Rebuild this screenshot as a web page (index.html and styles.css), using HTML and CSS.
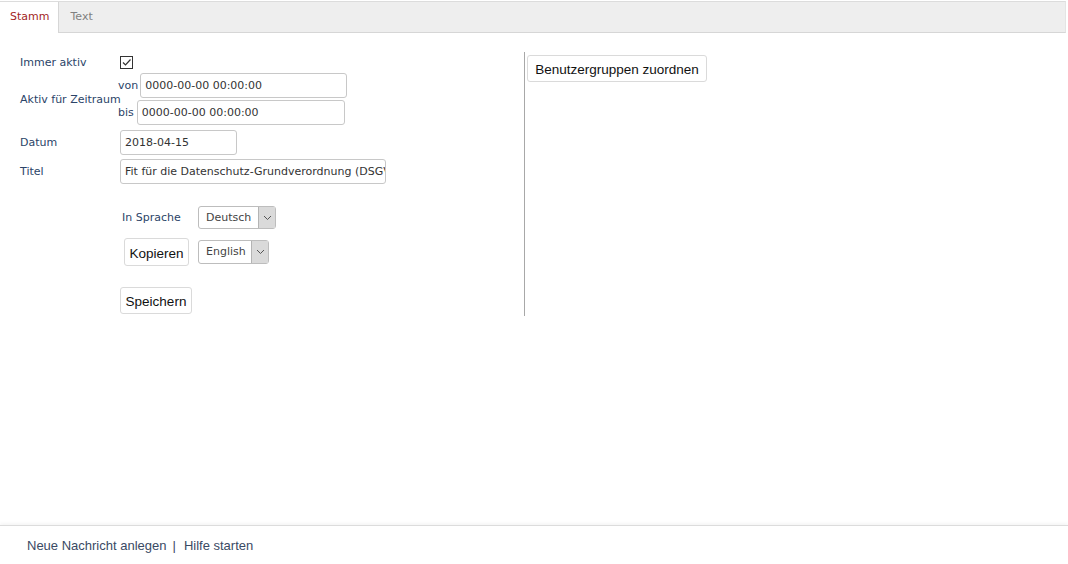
FILE: index.html
```html
<!DOCTYPE html>
<html lang="de">
<head>
<meta charset="utf-8">
<title>Nachricht</title>
<link rel="stylesheet" href="styles.css">
</head>
<body>
<div class="page">
  <div class="tabs">
    <div class="tab active">Stamm</div>
    <div class="tab">Text</div>
  </div>
  <div class="main">
    <div class="left">
      <div class="row row-check">
        <div class="label">Immer aktiv</div>
        <span class="checkbox"><svg width="11" height="11" viewBox="0 0 11 11"><path d="M2 5.5 L4.5 8 L9.5 2.5" fill="none" stroke="#333" stroke-width="1.2"/></svg></span>
      </div>
      <div class="row row-range">
        <div class="label">Aktiv für Zeitraum</div>
        <div class="range">
          <div class="range-line">von<span class="input w-von">0000-00-00 00:00:00</span></div>
          <div class="range-line">bis<span class="input w-bis">0000-00-00 00:00:00</span></div>
        </div>
      </div>
      <div class="row row-datum">
        <div class="label">Datum</div>
        <span class="input w-datum">2018-04-15</span>
      </div>
      <div class="row row-titel">
        <div class="label">Titel</div>
        <span class="input w-titel">Fit für die Datenschutz-Grundverordnung (DSGVO)</span>
      </div>
      <div class="lang">
        <div class="lang-row">
          <span class="lang-label">In Sprache</span>
          <span class="select w-de"><span class="sel-text">Deutsch</span><span class="arrow"><svg width="9" height="6" viewBox="0 0 9 6"><path d="M1 1 L4.5 4.5 L8 1" fill="none" stroke="#555" stroke-width="1"/></svg></span></span>
        </div>
        <div class="lang-row copy-row">
          <button class="btn btn-copy" type="button">Kopieren</button>
          <span class="select w-en"><span class="sel-text">English</span><span class="arrow"><svg width="9" height="6" viewBox="0 0 9 6"><path d="M1 1 L4.5 4.5 L8 1" fill="none" stroke="#555" stroke-width="1"/></svg></span></span>
        </div>
        <button class="btn btn-save" type="button">Speichern</button>
      </div>
    </div>
    <div class="right">
      <button class="btn btn-groups" type="button">Benutzergruppen zuordnen</button>
    </div>
  </div>
  <div class="footer">
    <a class="flink">Neue Nachricht anlegen</a><span class="sep">|</span><a class="flink">Hilfe starten</a>
  </div>
</div>
</body>
</html>
```
FILE: styles.css
```css
html, body {
  margin: 0;
  padding: 0;
  background: #fff;
}
.page {
  height: 100vh;
  display: flex;
  flex-direction: column;
  font-family: "DejaVu Sans", sans-serif;
  font-size: 11px;
  color: #2b4468;
}
.tabs {
  margin-top: 1px;
  margin-right: 2px;
  border-top: 1px solid #dcdcdc;
  border-bottom: 1px solid #d6d6d6;
  border-right: 1px solid #e4e4e4;
  background: #eeeeee;
  height: 30px;
  display: flex;
}
.tab {
  padding: 0 9px 0 11px;
  line-height: 30px;
  color: #808080;
  font-size: 11px;
}
.tab.active {
  background: #fff;
  color: #a32525;
  border-right: 1px solid #d6d6d6;
  height: 31px;
  padding: 0 9px 0 10px;
}
.main {
  flex: 1;
  display: flex;
  align-items: flex-start;
  padding-top: 19px;
}
.left {
  width: 504px;
  padding-left: 20px;
  height: 264px;
  border-right: 1px solid #a8a8a8;
}
.right {
  padding-left: 2px;
  padding-top: 3px;
}
.row {
  display: flex;
  align-items: center;
}
.label {
  width: 100px;
  flex: none;
  white-space: nowrap;
}
.row-check {
  height: 20px;
  align-items: flex-start;
}
.row-check .label {
  line-height: 21px;
}
.checkbox {
  margin-top: 4px;
  width: 11px;
  height: 11px;
  border: 1px solid #333;
  display: flex;
  align-items: center;
  justify-content: center;
  background: #fff;
}
.row-range {
  margin-top: 1px;
}
.row-range .label {
  width: 98px;
  position: relative;
  z-index: 1;
}
.range {
  display: flex;
  flex-direction: column;
  gap: 2px;
}
.range-line {
  display: flex;
  align-items: center;
  white-space: nowrap;
}
.input {
  display: block;
  box-sizing: border-box;
  height: 25px;
  line-height: 23px;
  border: 1px solid #c8c8c8;
  border-radius: 3px;
  padding: 0 4px;
  color: #333;
  background: #fff;
  white-space: nowrap;
  overflow: hidden;
  font-size: 11px;
}
.w-von { width: 207px; margin-left: 2px; }
.w-bis { width: 208px; margin-left: 3px; }
.w-datum { width: 117px; }
.w-titel { width: 266px; }
.row-datum { margin-top: 5px; }
.row-titel { margin-top: 4px; }
.lang {
  margin-top: 22px;
  padding-left: 100px;
}
.lang-row {
  display: flex;
  align-items: center;
}
.lang-label {
  width: 78px;
  padding-left: 2px;
  box-sizing: border-box;
}
.select {
  box-sizing: border-box;
  height: 23px;
  border: 1px solid #bdbdbd;
  border-radius: 3px;
  display: flex;
  align-items: stretch;
  background: #fff;
  color: #444;
}
.sel-text {
  flex: 1;
  padding-left: 7px;
  line-height: 21px;
}
.arrow {
  width: 16px;
  background: #dadada;
  border-left: 1px solid #b4b4b4;
  display: flex;
  align-items: center;
  justify-content: center;
}
.w-de { width: 78px; }
.w-en { width: 71px; height: 24px; }
.w-en .sel-text { line-height: 22px; padding-left: 7px; }
.btn {
  font-family: "Liberation Sans", Arial, sans-serif;
  font-size: 13.5px;
  color: #111;
  background: #fff;
  border: 1px solid #dadada;
  border-radius: 3px;
  padding: 0 5px;
  cursor: pointer;
}
.copy-row {
  margin-top: 9px;
}
.btn-copy {
  height: 28px;
  width: 65px;
  margin-left: 4px;
  margin-right: 9px;
  padding: 2px 0 0;
}
.btn-save {
  display: block;
  margin-top: 21px;
  height: 27px;
  width: 72px;
  padding: 1px 0 0;
}
.btn-groups {
  height: 27px;
  width: 180px;
  padding: 1px 0 0;
}
.footer {
  height: 38px;
  border-top: 1px solid #dcdcdc;
  box-shadow: 0 -2px 3px rgba(0, 0, 0, 0.04);
  display: flex;
  align-items: center;
  padding-left: 27px;
  font-family: "Liberation Sans", Arial, sans-serif;
  font-size: 13px;
  color: #3a4a64;
}
.flink {
  color: #3a4a64;
}
.sep {
  margin: 0 8px 0 6px;
}
```
